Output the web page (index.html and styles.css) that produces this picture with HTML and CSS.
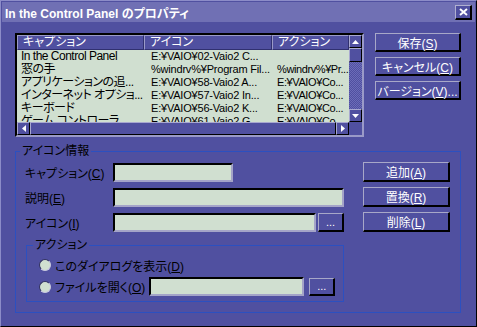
FILE: index.html
```html
<!DOCTYPE html>
<html lang="ja">
<head>
  <meta charset="UTF-8" />
  <title>In the Control Panel のプロパティ</title>
  <link rel="stylesheet" href="styles.css">
</head>
<body>
  <div class="window">
    <div class="titlebar">
      <span class="title">In the Control Panel のプロパティ</span>
      <button class="close-button" aria-label="閉じる">
        <svg width="9" height="8" viewBox="0 0 9 8"><path d="M1 1L8 7M8 1L1 7" stroke="#fff" stroke-width="2" fill="none"/></svg>
      </button>
    </div>

    <div class="content">
      <div class="top-row">
        <div class="listview">
          <div class="list-main">
            <div class="list-area">
              <div class="list-header">
                <div class="col c1">キャプション</div>
                <div class="col c2">アイコン</div>
                <div class="col c3">アクション</div>
              </div>
              <div class="list-row"><div class="col c1">In the Control Panel</div><div class="col c2">E:¥VAIO¥02-Vaio2 C...</div><div class="col c3"></div></div>
              <div class="list-row"><div class="col c1">窓の手</div><div class="col c2">%windrv%¥Program Fil...</div><div class="col c3">%windrv%¥Pr...</div></div>
              <div class="list-row"><div class="col c1">アプリケーションの追...</div><div class="col c2">E:¥VAIO¥58-Vaio2 A...</div><div class="col c3">E:¥VAIO¥Co...</div></div>
              <div class="list-row"><div class="col c1">インターネット オプショ...</div><div class="col c2">E:¥VAIO¥57-Vaio2 In...</div><div class="col c3">E:¥VAIO¥Co...</div></div>
              <div class="list-row"><div class="col c1">キーボード</div><div class="col c2">E:¥VAIO¥56-Vaio2 K...</div><div class="col c3">E:¥VAIO¥Co...</div></div>
              <div class="list-row"><div class="col c1">ゲーム コントローラ</div><div class="col c2">E:¥VAIO¥61-Vaio2 G...</div><div class="col c3">E:¥VAIO¥Co...</div></div>
            </div>
            <div class="vscroll">
              <div class="sb-btn"><svg width="7" height="4"><polygon points="3.5,0 7,4 0,4" fill="#fff"/></svg></div>
              <div class="sb-thumb"></div>
              <div class="sb-track"></div>
              <div class="sb-btn"><svg width="7" height="4"><polygon points="0,0 7,0 3.5,4" fill="#fff"/></svg></div>
            </div>
          </div>
          <div class="hscroll">
            <div class="sb-btn"><svg width="4" height="7"><polygon points="4,0 4,7 0,3.5" fill="#fff"/></svg></div>
            <div class="sb-thumb wide"></div>
            <div class="sb-btn"><svg width="4" height="7"><polygon points="0,0 4,3.5 0,7" fill="#fff"/></svg></div>
            <div class="sb-corner"></div>
          </div>
        </div>

        <div class="side-buttons">
          <button class="btn">保存(<u>S</u>)</button>
          <button class="btn">キャンセル(<u>C</u>)</button>
          <button class="btn">バージョン(<u>V</u>)...</button>
        </div>
      </div>

      <fieldset class="group">
        <legend>アイコン情報</legend>
        <div class="group-body">
          <div class="form">
            <div class="field"><label>キャプション(<u>C</u>)</label><div class="input w1"></div></div>
            <div class="field"><label>説明(<u>E</u>)</label><div class="input w2"></div></div>
            <div class="field"><label>アイコン(<u>I</u>)</label><div class="input w3"></div><button class="btn dots">...</button></div>

            <fieldset class="group sub">
              <legend>アクション</legend>
              <div class="sub-body">
                <div class="radio-row"><span class="radio"></span><span class="radio-label">このダイアログを表示(<u>D</u>)</span></div>
                <div class="radio-row tall"><span class="radio"></span><span class="radio-label">ファイルを開く(<u>O</u>)</span><div class="input file"></div><button class="btn dots small">...</button></div>
              </div>
            </fieldset>
          </div>

          <div class="item-buttons">
            <button class="btn">追加(<u>A</u>)</button>
            <button class="btn">置換(<u>R</u>)</button>
            <button class="btn">削除(<u>L</u>)</button>
          </div>
        </div>
      </fieldset>
    </div>
  </div>
</body>
</html>
```

FILE: styles.css
```css
* {
  box-sizing: border-box;
}

body {
  margin: 0;
  background-color: #5050a0;
  font-family: "Liberation Sans", "Noto Sans CJK JP", sans-serif;
  font-size: 12px;
  font-feature-settings: "palt";
  color: #000;
}

.window {
  width: 477px;
  height: 327px;
  background-color: #5050a0;
  border: 1px solid;
  border-color: #8c8cc8 #000 #000 #8c8cc8;
  padding: 1px;
}

.titlebar {
  height: 20px;
  background-color: #7070b4;
  color: #fff;
  font-weight: bold;
  display: flex;
  align-items: center;
  justify-content: space-between;
  padding: 0 3px;
}

.close-button {
  width: 17px;
  height: 15px;
  padding: 0;
  background-color: #5050a0;
  border-style: solid;
  border-width: 1px 2px 2px 1px;
  border-color: #b0b0d0 #000 #000 #b0b0d0;
  display: flex;
  align-items: center;
  justify-content: center;
}

.content {
  padding: 11px 0 0 13px;
}

.top-row {
  display: flex;
  gap: 11px;
}

/* list view */
.listview {
  width: 349px;
  height: 104px;
  border: 2px solid;
  border-color: #000 #9a9ac8 #9a9ac8 #000;
  display: flex;
  flex-direction: column;
}

.list-main {
  display: flex;
  height: 87px;
}

.list-area {
  width: 332px;
  background-color: #d0dfd0;
  overflow: hidden;
}

.list-header {
  display: flex;
  height: 15px;
  background-color: #5050a0;
  color: #fff;
}

.list-header .col {
  line-height: 13px;
  border-style: solid;
  border-width: 1px;
  border-color: #9a9ac8 #303070 #303070 #9a9ac8;
  padding-left: 5px;
}

.list-row {
  display: flex;
  height: 13px;
  line-height: 13px;
  letter-spacing: -0.5px;
}

.list-row .c2,
.list-row .c3 {
  font-size: 11px;
  letter-spacing: -0.2px;
}

.list-row .c3 {
  letter-spacing: -0.4px;
  padding-left: 5px;
}

.col {
  overflow: hidden;
  white-space: nowrap;
  text-overflow: ellipsis;
  padding-left: 4px;
  flex: none;
}

.c1 { width: 127px; }
.c2 { width: 128px; padding-left: 7px; }
.c3 { width: 77px; padding-left: 6px; }

.vscroll {
  width: 13px;
  display: flex;
  flex-direction: column;
}

.hscroll {
  display: flex;
  height: 13px;
}

.sb-btn {
  width: 13px;
  height: 13px;
  flex: none;
  background-color: #5050a0;
  border-style: solid;
  border-width: 1px;
  border-color: #a8a8d0 #000 #000 #a8a8d0;
  display: flex;
  align-items: center;
  justify-content: center;
}

.sb-thumb {
  height: 14px;
  width: 13px;
  background-color: #5050a0;
  border-style: solid;
  border-width: 1px;
  border-color: #a8a8d0 #000 #000 #a8a8d0;
}

.sb-thumb.wide {
  flex: 1;
  height: 13px;
  width: auto;
}

.sb-track {
  flex: 1;
  background-color: #5858a8;
  background-image: conic-gradient(#6c6cb8 25%, #5050a0 0 50%, #6c6cb8 0 75%, #5050a0 0);
  background-size: 2px 2px;
}

.sb-corner {
  width: 13px;
  background-color: #5050a0;
}

/* buttons */
.btn {
  font: inherit;
  color: #fff;
  background-color: #5050a0;
  border-style: solid;
  border-width: 1px 2px 2px 1px;
  border-color: #a8a8c8 #000 #000 #a8a8c8;
  padding: 0;
  white-space: nowrap;
  cursor: pointer;
}

.btn u {
  text-underline-offset: 1px;
}

.side-buttons {
  display: flex;
  flex-direction: column;
  gap: 5px;
}

.side-buttons .btn {
  width: 86px;
  height: 19px;
}

/* group boxes */
.group {
  margin: 7px 0 0 0;
  width: 446px;
  min-width: 0;
  padding: 0;
  border-width: 1px;
  border-style: solid;
  border-color: #2c50c0;
}

.group legend {
  margin-left: 4px;
  padding: 0 2px;
  line-height: 14px;
}

.group-body {
  display: flex;
  justify-content: space-between;
  padding: 4px 10px 10px 9px;
}

.form {
  width: 319px;
  padding-top: 1px;
  display: flex;
  flex-direction: column;
  gap: 6px;
}

.field {
  display: flex;
  align-items: center;
  height: 19px;
}

.field label {
  width: 88px;
  flex: none;
}

.input {
  height: 19px;
  background-color: #d0dfd0;
  border: 2px solid;
  border-color: #000 #a4a4c8 #a4a4c8 #000;
  flex: none;
}

.w1 { width: 120px; }
.w2 { width: 231px; }
.w3 { width: 203px; }

.dots {
  width: 26px;
  height: 19px;
  margin-left: 2px;
  font-size: 11px;
  flex: none;
}

.dots.small {
  margin-left: 1px;
  height: 18px;
}

.item-buttons {
  display: flex;
  flex-direction: column;
  gap: 5px;
}

.item-buttons .btn {
  width: 87px;
  height: 20px;
}

.group.sub {
  margin: 0 0 0 1px;
  width: 318px;
}

.group.sub legend {
  margin-left: 6px;
}

.sub-body {
  padding: 6px 8px 5px 12px;
  display: flex;
  flex-direction: column;
  gap: 5px;
}

.radio-row {
  display: flex;
  align-items: center;
  gap: 4px;
  height: 14px;
}

.radio-row.tall {
  height: 19px;
}

.radio-label {
  white-space: nowrap;
  flex: none;
}

.radio {
  width: 12px;
  height: 12px;
  border-radius: 50%;
  background-color: #d0dfd0;
  border: 1px solid;
  border-color: #303060 #c8c8e0 #c8c8e0 #303060;
  flex: none;
}

.input.file {
  width: 155px;
  margin-left: auto;
}
```
